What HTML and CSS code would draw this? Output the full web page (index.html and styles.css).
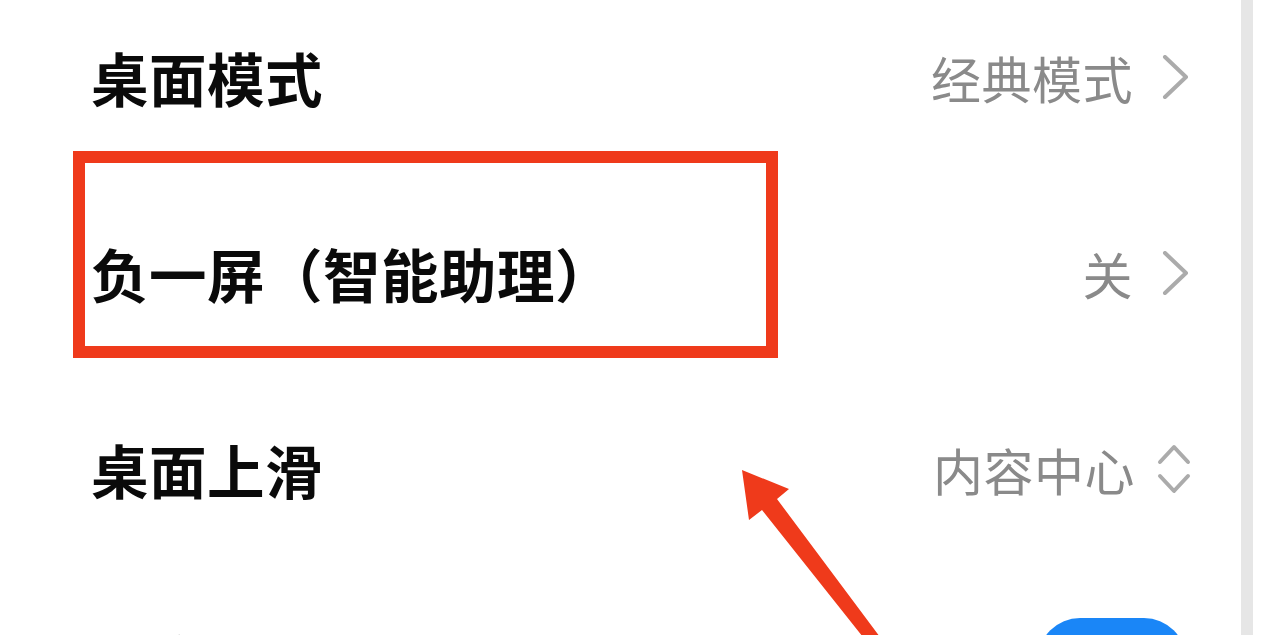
FILE: index.html
```html
<!DOCTYPE html>
<html lang="zh-CN">
<head>
<meta charset="utf-8">
<title>桌面设置</title>
<link rel="stylesheet" href="styles.css">
</head>
<body>
<div class="screen">
  <div class="content">
    <div class="list">
      <div class="row">
        <div class="title">桌面模式</div>
        <div class="value">
          <span class="value-text">经典模式</span>
          <svg class="chev" width="28" height="44" viewBox="0 0 28 44"><path d="M3 2 L24 22 L3 42" fill="none" stroke="#ababab" stroke-width="4" stroke-linecap="round" stroke-linejoin="round"/></svg>
        </div>
      </div>
      <div class="row">
        <div class="title">负一屏（智能助理）</div>
        <div class="value">
          <span class="value-text">关</span>
          <svg class="chev" width="28" height="44" viewBox="0 0 28 44"><path d="M3 2 L24 22 L3 42" fill="none" stroke="#ababab" stroke-width="4" stroke-linecap="round" stroke-linejoin="round"/></svg>
        </div>
      </div>
      <div class="row">
        <div class="title">桌面上滑</div>
        <div class="value">
          <span class="value-text">内容中心</span>
          <svg class="updown" width="34" height="50" viewBox="0 0 34 50"><path d="M3 18 L17 3 L31 18 M3 32 L17 47 L31 32" fill="none" stroke="#ababab" stroke-width="4" stroke-linecap="round" stroke-linejoin="round"/></svg>
        </div>
      </div>
      <div class="row row-switch">
        <div class="title">锁定桌面布局</div>
        <div class="toggle"></div>
      </div>
    </div>
  </div>
  <div class="scrollbar"></div>
  <div class="gutter"></div>

  <div class="highlight"></div>
  <svg class="arrow" width="1280" height="635" viewBox="0 0 1280 635">
    <polygon points="742,470 789,489 777,499 927,700 913,700 762,510 749,520" fill="#ef3a1b"/>
  </svg>
</div>
</body>
</html>
```

FILE: styles.css
```css
html, body {
  margin: 0;
  padding: 0;
  background: #ffffff;
}

body {
  width: 1280px;
  height: 635px;
  overflow: hidden;
  font-family: "Noto Sans CJK SC", "Noto Sans", sans-serif;
}

.screen {
  position: relative;
  display: flex;
  width: 1280px;
  height: 635px;
  overflow: hidden;
}

.content {
  flex: 1;
  min-width: 0;
}

.scrollbar {
  width: 12px;
  background: #e6e6e6;
}

.gutter {
  width: 27px;
  background: #ffffff;
}

.list {
  margin-top: -21px;
  display: flex;
  flex-direction: column;
}

.row {
  height: 196px;
  display: flex;
  align-items: center;
  justify-content: space-between;
  padding: 0 50px 0 91px;
  box-sizing: border-box;
}

.title {
  font-size: 57.5px;
  font-weight: 700;
  color: #0a0a0a;
  line-height: 68px;
  letter-spacing: 0.5px;
}

.value {
  display: flex;
  align-items: center;
}

.value-text {
  font-size: 50px;
  color: #8a8a8a;
  line-height: 60px;
  letter-spacing: 0.5px;
}

.chev {
  display: block;
  margin-left: 29px;
  margin-right: 1px;
}

.updown {
  display: block;
  margin-left: 22px;
}

.row-switch {
  align-items: flex-start;
  height: 260px;
}

.row-switch .title {
  margin-top: 59px;
}

.toggle {
  margin-top: 51px;
  margin-right: 5px;
  width: 148px;
  height: 84px;
  border-radius: 42px;
  background: #1a86f7;
}

.highlight {
  position: absolute;
  left: 73px;
  top: 151px;
  width: 705px;
  height: 207px;
  box-sizing: border-box;
  border: 12px solid #ef3a1b;
}

.arrow {
  position: absolute;
  left: 0;
  top: 0;
}
```
